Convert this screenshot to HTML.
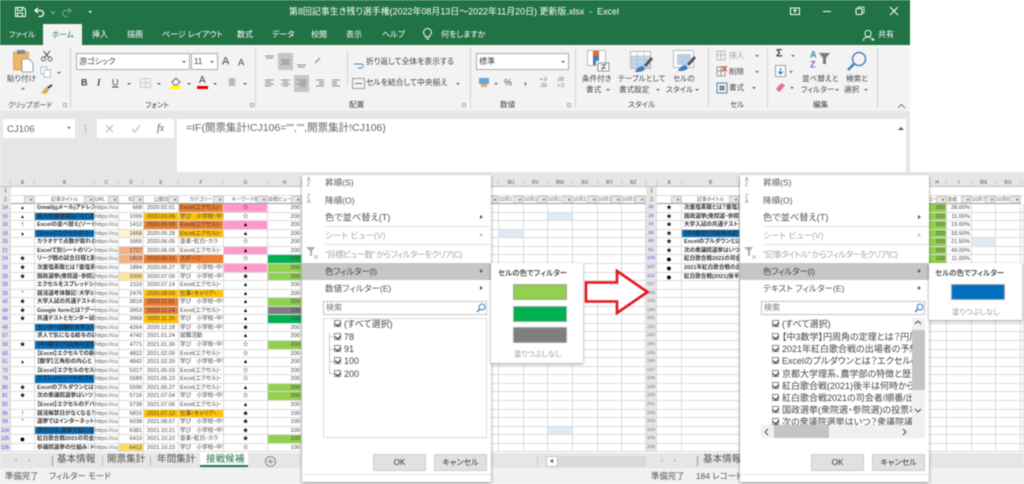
<!DOCTYPE html>
<html lang="ja"><head><meta charset="utf-8"><title>Excel</title>
<style>
*{box-sizing:border-box;margin:0;padding:0}
html,body{width:1024px;height:484px;overflow:hidden;background:#fff}
body{font-family:"Liberation Sans","Noto Sans CJK JP",sans-serif;font-feature-settings:"palt";color:#444}
#w{position:absolute;left:0;top:0;width:1024px;height:484px;overflow:hidden;filter:blur(.4px)}
.a{position:absolute}
.t{position:absolute;white-space:nowrap;line-height:1;transform:translateY(-50%)}
.w8{font-size:8px;color:#fff}
.r8{font-size:7.6px;color:#444}
.sp{position:absolute;width:1px;top:48px;height:60px;background:#d2d2d2}
.ar{position:absolute;width:0;height:0;border-left:2px solid transparent;border-right:2px solid transparent;border-top:2px solid #666}
.g{position:absolute;top:204px;font-size:5.6px;line-height:8.57px;color:#444}
.r{display:flex;height:8.57px}
.r>span{display:block;height:8.57px;overflow:hidden;white-space:nowrap;border-right:1px solid #dcdcdc;border-bottom:1px solid #dcdcdc;background-color:#fff}
.L .r>:nth-child(1){width:11px;background:#e6e6e6;color:#4a4ae8;text-align:center;font-size:5px}
.L .r>:nth-child(2){width:24px;text-align:center;color:#000}
.L .r>:nth-child(3){width:60px;font-weight:bold;color:#333;padding-left:2px}
.L .r>:nth-child(4){width:24px;color:#555}
.L .r>:nth-child(5){width:25px;text-align:right;padding-right:1px}
.L .r>:nth-child(6){width:35px;text-align:center}
.L .r>:nth-child(7){width:45px;padding-left:1px}
.L .r>:nth-child(8){width:44px;text-align:center;color:#000}
.L .r>:nth-child(9){width:34px;text-align:right;padding-right:1px}
.M .r>:nth-child(1){width:8px}
.M .r>:nth-child(2){width:25px}.M .r>:nth-child(3){width:24px}.M .r>:nth-child(4){width:25px}.M .r>:nth-child(5){width:25px}.M .r>:nth-child(6){width:24px}.M .r>:nth-child(7){width:24px}
.M .r>:nth-child(8),.R .r>:nth-child(1){width:11px;background:#e6e6e6;color:#4a4ae8;text-align:center;font-size:4.8px}
.R .r>:nth-child(2){width:25px;text-align:center;color:#000}
.R .r>:nth-child(3){width:58px;font-weight:bold;color:#333;padding-left:2px}
.R .r>:nth-child(4){width:188px}
.R .r>:nth-child(5){width:19px;text-align:right;padding-right:1px}
.R .r>:nth-child(6){width:25px;text-align:right;padding-right:1px}
.R .r>:nth-child(7){width:24px}.R .r>:nth-child(8){width:25px}.R .r>:nth-child(9){width:3px}
.n>span{color:#777!important}
.r>span.o{background:#ed7d31}.r>span.y{background:#ffc000}.r>span.p{background:#ff99cc}
.r>span.bl{background:#0070c0;color:#111}.r>span.gr{background:#92d050}.r>span.g2{background:#00b050}
.r>span.k{background:#7f7f7f}.r>span.ly{background:#fff2cc}.r>span.lo{background:#f4b183}
.r>span.l2{background:#ffe699}.r>span.l3{background:#ffd966}.r>span.lb{background:#ddebf7}
.s{color:#c4c4c4}
.h{position:absolute;top:180px;height:7px;background:#e6e6e6;border-right:1px solid #cfcfcf;border-bottom:1px solid #c0c0c0;font-size:5px;line-height:7px;text-align:center;color:#555}
.f{position:absolute;top:196px;height:8px;background:#fff;border-right:1px solid #dcdcdc;border-bottom:1px solid #9a9a9a;font-size:5px;line-height:8px;color:#555;white-space:nowrap;overflow:hidden;text-align:center}
.f::after{content:"";position:absolute;right:0;top:0;width:8px;height:7px;background:#e6e6e6;border:1px solid #c8c8c8}
.f::before{content:"";position:absolute;right:2.500px;top:3px;width:0;height:0;border-left:1.500px solid transparent;border-right:1.500px solid transparent;border-top:2px solid #333;z-index:2}
.menu{position:absolute;top:175px;width:189px;height:307px;background:#fff;box-shadow:0 1px 3px rgba(0,0,0,.45);font-size:8.6px;color:#555}
.menu .t{left:23px}
.dis{color:#aaa!important}
.tri{position:absolute;left:178px;width:0;height:0;border-top:2.500px solid transparent;border-bottom:2.500px solid transparent;border-left:3px solid #555}
.ln{position:absolute;left:23px;right:0;height:1px;background:#e2e2e2}
.box{position:absolute;border:1px solid #dadada;background:#fff}
.btn{position:absolute;top:279px;width:53px;height:17px;background:#e1e1e1;border:1px solid #cfcfcf;text-align:center;font-size:8px;line-height:15px;color:#333}
.cb{position:absolute;left:32px;width:7px;height:7px;border:1px solid #8a8a8a;background:#fff}
.cb::after{content:"";position:absolute;left:1px;top:0;width:3px;height:4px;border:solid #222;border-width:0 1px 1px 0;transform:rotate(40deg)}
.it{position:absolute;left:42px;white-space:nowrap;font-size:9px;line-height:12px;color:#444}
.st{position:absolute;left:27px;width:5px;height:1px;background:#c8c8c8}
.sub{position:absolute;top:263px;background:#fff;box-shadow:0 1px 3px rgba(0,0,0,.4);z-index:3}
.sw{position:absolute;left:22px;width:54px;height:16px;border:1px solid #a8a8a8}
</style></head><body><div id="w">

<div class="a" style="left:0;top:0;width:910px;height:45px;background:#217346"></div>
<div class="a" style="left:0;top:45px;width:910px;height:66px;background:#f3f3f3"></div>
<div class="a" style="left:0;top:111px;width:910px;height:67px;background:#e6e6e6"></div>
<div class="a" style="left:0;top:172px;width:1024px;height:8px;background:#e6e6e6"></div>

<svg class="a" style="left:14px;top:6px" width="100" height="12" viewBox="0 0 100 12" fill="none"><path d="M1.5 1.5h8l2 2v7h-10z M3.5 1.5v3h5v-3 M3.5 10.500v-3.500h5v3.500" stroke="#fff" stroke-width="1"/><path d="M24 2l-3 2.500 3 2.500M21.500 4.500h5a3 3 0 0 1 0 6h-2" stroke="#fff" stroke-width="1.300"/><path d="M37 5.500l2 2 2-2" stroke="#cfe3d8" stroke-width=".6"/><path d="M54 2l3 2.500-3 2.500M56.500 4.500h-5a3 3 0 0 0 0 6h2" stroke="#6aa386" stroke-width="1.200"/><path d="M78 5h-3.600l1.800 2.200z" fill="#fff"/></svg>
<div class="t w8" style="left:289px;top:12px;font-size:8.950px">第8回記事生き残り選手権(2022年08月13日～2022年11月20日) 更新版.xlsx&nbsp; -&nbsp; Excel</div>
<svg class="a" style="left:785px;top:5px" width="120" height="12" viewBox="0 0 120 12" fill="none" stroke="#fff"><rect x="5.500" y="3" width="9" height="6.500" stroke-width="1"/><path d="M10 8V4.500M8.500 6L10 4.500 11.500 6" stroke-width="1"/><path d="M38 6.500h8" stroke-width="1"/><rect x="71" y="3.500" width="6" height="6" rx="1" stroke-width="1"/><path d="M73 3.500v-1.500h6v6h-2" stroke-width=".8"/><path d="M105 2l8 8M113 2l-8 8" stroke-width="1"/></svg>

<div class="a" style="left:43px;top:24px;width:39px;height:21px;background:#f3f3f3"></div>
<div class="t w8" style="left:9px;top:34.500px;font-size:7.600px">ファイル</div>
<div class="t w8" style="left:52px;top:34.500px;color:#217346;font-size:7.600px">ホーム</div>
<div class="t w8" style="left:92px;top:34.500px">挿入</div>
<div class="t w8" style="left:127px;top:34.500px">描画</div>
<div class="t w8" style="left:162px;top:34.500px">ページ レイアウト</div>
<div class="t w8" style="left:237px;top:34.500px">数式</div>
<div class="t w8" style="left:272px;top:34.500px">データ</div>
<div class="t w8" style="left:311px;top:34.500px">校閲</div>
<div class="t w8" style="left:346px;top:34.500px">表示</div>
<div class="t w8" style="left:382px;top:34.500px">ヘルプ</div>
<svg class="a" style="left:422px;top:28px" width="11" height="13" viewBox="0 0 11 13" fill="none" stroke="#fff"><path d="M3.500 9V7.800C2.500 7 1.500 6 1.500 4.500a4 4 0 0 1 8 0C9.500 6 8.500 7 7.500 7.800V9zM4 11h3" stroke-width=".9"/></svg>
<div class="t w8" style="left:441px;top:34.500px">何をしますか</div>
<svg class="a" style="left:862px;top:29px" width="13" height="13" viewBox="0 0 13 13" fill="none" stroke="#fff"><circle cx="6" cy="4.500" r="3.200" stroke-width=".9"/><path d="M1 12c.5-3 2-4 5-4 1.500 0 2.500.5 3 1M9 10.500h3.500M10.800 9v3" stroke-width=".9"/></svg>
<div class="t w8" style="left:878px;top:34.500px">共有</div>

<!-- clipboard -->
<svg class="a" style="left:12px;top:49px" width="24" height="24" viewBox="0 0 24 24"><rect x="1.500" y="3" width="15" height="18" fill="#e8b96a" stroke="#c99a4a" stroke-width=".7"/><rect x="5" y="1" width="8" height="4" fill="#888"/><path d="M10 10h7l4 4v9H10z" fill="#fff" stroke="#8a8a8a" stroke-width=".8"/></svg>
<div class="t r8" style="left:7px;top:79px">貼り付け</div><div class="ar" style="left:21px;top:88px"></div>
<svg class="a" style="left:40px;top:50px" width="14" height="12" viewBox="0 0 14 12" fill="none" stroke="#4d6f95"><circle cx="3.500" cy="9" r="2" stroke-width="1"/><circle cx="10" cy="9" r="2" stroke-width="1"/><path d="M4.500 7.500L10 1M9 7.500L3.500 1" stroke="#555" stroke-width="1"/></svg>
<svg class="a" style="left:40px;top:66px" width="12" height="12" viewBox="0 0 12 12" fill="#fff" stroke="#9db3c9"><rect x="1" y="1" width="6" height="7" stroke-width=".8"/><rect x="4" y="4" width="6.500" height="7" stroke-width=".8"/></svg>
<div class="ar" style="left:57px;top:72px"></div>
<svg class="a" style="left:40px;top:83px" width="13" height="12" viewBox="0 0 13 12"><path d="M7 4L12 1l.5 1.500L8.500 6z" fill="#444"/><path d="M1 10l5-6 3 3-3 4z" fill="#e0ab55"/></svg>
<div class="t r8" style="left:8px;top:105px;font-size:7.200px">クリップボード</div>
<div class="sp" style="left:70px"></div>
<!-- font -->
<div class="box" style="left:76px;top:53px;width:114px;height:17px;border-color:#ababab;font-size:8px;line-height:15px;padding-left:2px;color:#444">游ゴシック</div>
<div class="ar" style="left:182px;top:61px"></div>
<div class="box" style="left:191px;top:53px;width:27px;height:17px;border-color:#ababab;font-size:8px;line-height:15px;padding-left:2px;color:#444">11</div>
<div class="ar" style="left:210px;top:61px"></div>
<div class="t" style="left:222px;top:62px;font-size:11px;color:#444">A</div>
<div class="t" style="left:238px;top:63px;font-size:9.500px;color:#444">A</div>
<div class="t" style="left:81px;top:83px;font-size:9px;font-weight:bold;color:#444">B</div>
<div class="t" style="left:97px;top:83px;font-size:9px;font-style:italic;font-family:'Liberation Serif',serif;font-weight:bold;color:#444">I</div>
<div class="t" style="left:112px;top:83px;font-size:9px;text-decoration:underline;color:#444">U</div>
<div class="ar" style="left:127px;top:83px"></div>
<svg class="a" style="left:140px;top:78px" width="12" height="11" viewBox="0 0 12 11" fill="none" stroke="#c4c4c4"><rect x=".5" y=".5" width="10" height="9" stroke-width=".8"/><path d="M5.500.5v9M.5 5h10" stroke-width=".8"/></svg>
<div class="ar" style="left:157px;top:83px"></div>
<svg class="a" style="left:170px;top:76px" width="12" height="13" viewBox="0 0 12 13" fill="none" stroke="#666"><path d="M2 6l4-4 4 4-3 3H4z" stroke-width=".9"/></svg>
<div class="a" style="left:170px;top:86px;width:11px;height:2.500px;background:#ffff00"></div>
<div class="ar" style="left:187px;top:83px"></div>
<div class="t" style="left:199px;top:81px;font-size:10px;color:#444">A</div>
<div class="a" style="left:197px;top:86px;width:11px;height:2.500px;background:#e00000"></div>
<div class="ar" style="left:213px;top:83px"></div>
<div class="t" style="left:228px;top:83px;font-size:8px;color:#777">亜</div>
<div class="ar" style="left:243px;top:83px"></div>
<div class="t r8" style="left:145px;top:105px;font-size:7.400px">フォント</div>
<div class="sp" style="left:255px"></div>
<!-- align -->
<div class="a" style="left:278px;top:53px;width:15px;height:17px;background:#c6c6c6"></div>
<div class="a" style="left:294px;top:75px;width:15px;height:17px;background:#c6c6c6"></div>
<svg class="a" style="left:262px;top:54px" width="80" height="36" viewBox="0 0 80 36" stroke="#8f8f8f" stroke-width="1"><path d="M3 2h9M4 4h7M19 6h9M20 8h7M19 10h9M35 11h9M36 13h7"/><path d="M3 26h9M3 28h6M3 30h9M3 32h6M19 26h9M21 28h5M19 30h9M21 32h5M35 26h9M38 28h6M35 30h9M38 32h6"/><path d="M54 26h8M57 28h5M57 30h5M54 32h8M70 26h8M70 28h5M70 30h5M70 32h8"/><path d="M58 4l-5 5" stroke="#777"/></svg>
<div class="sp" style="left:347px;height:36px;top:50px"></div>
<svg class="a" style="left:352px;top:55px" width="14" height="36" viewBox="0 0 14 36" fill="none" stroke="#4d82b8"><path d="M2 9h7a2 2 0 0 1 0 4H6" stroke-width=".9"/><rect x=".5" y="23.500" width="12" height="10" stroke="#888" stroke-width=".8"/><path d="M3 28.500h7" stroke-width="1"/></svg>
<div class="t r8" style="left:366px;top:62px;font-size:7.800px">折り返して全体を表示する</div>
<div class="t r8" style="left:366px;top:83px;font-size:7.800px">セルを結合して中央揃え</div>
<div class="ar" style="left:456px;top:83px"></div>
<div class="t r8" style="left:349px;top:105px">配置</div>
<div class="sp" style="left:470px"></div>
<!-- number -->
<div class="box" style="left:476px;top:53px;width:93px;height:17px;border-color:#ababab;font-size:8px;line-height:15px;padding-left:2px;color:#444">標準</div>
<div class="ar" style="left:561px;top:61px"></div>
<svg class="a" style="left:478px;top:77px" width="12" height="11" viewBox="0 0 12 11"><rect x="1" y="1" width="10" height="6" fill="#6fa3d6"/><rect x="3" y="7" width="6" height="3" fill="#e0ab55"/></svg>
<div class="ar" style="left:494px;top:83px"></div>
<div class="t" style="left:504px;top:83px;font-size:9px;color:#555">%</div>
<div class="t" style="left:524px;top:82px;font-size:10px;font-weight:bold;color:#444">,</div>
<div class="t" style="left:540px;top:83px;font-size:5px;line-height:6px;white-space:normal;width:12px;color:#4a6f96">+.0 .00</div>
<div class="t" style="left:557px;top:83px;font-size:5px;line-height:6px;white-space:normal;width:12px;color:#4a6f96">.00 +.0</div>
<div class="t r8" style="left:500px;top:105px">数値</div>
<div class="sp" style="left:575px"></div>
<!-- styles -->
<svg class="a" style="left:587px;top:50px" width="24" height="22" viewBox="0 0 24 22"><rect x=".5" y=".5" width="18" height="15" fill="#fff" stroke="#aaa" stroke-width=".8"/><rect x="6" y="1" width="6" height="5" fill="#e8662f"/><rect x="6" y="6" width="6" height="5" fill="#3f7fc1"/><rect x="6" y="11" width="3" height="4" fill="#3f7fc1"/><rect x="11" y="13" width="11" height="8" fill="#fff" stroke="#777" stroke-width=".8"/><path d="M14 15h5M14 18h5M18 14l-3 6" stroke="#444" stroke-width=".7"/></svg>
<svg class="a" style="left:630px;top:51px" width="24" height="22" viewBox="0 0 24 22"><rect x=".5" y=".5" width="20" height="17" fill="#fff" stroke="#aaa" stroke-width=".8"/><rect x="1" y="5" width="19" height="12" fill="#c5d6ea"/><path d="M7 1v16M14 1v16M1 5h19M1 9h19M1 13h19" stroke="#a0b3c7" stroke-width=".5"/><path d="M14 14L21 6l2 2-7 8z" fill="#555"/><path d="M5 21c1-3 4-6 8-6l2 3c-2 3-6 3-10 3z" fill="#3f7fc1"/></svg>
<svg class="a" style="left:673px;top:50px" width="24" height="23" viewBox="0 0 24 23"><rect x=".5" y=".5" width="20" height="17" fill="#fff" stroke="#aaa" stroke-width=".8"/><rect x="4" y="4" width="14" height="11" fill="#b9cde6"/><path d="M14 14L21 6l2 2-7 8z" fill="#555"/><path d="M5 21c1-3 4-6 8-6l2 3c-2 3-6 3-10 3z" fill="#3f7fc1"/></svg>
<div class="t r8" style="left:582px;top:79px">条件付き</div>
<div class="t r8" style="left:586px;top:90px">書式</div><div class="ar" style="left:606px;top:89px"></div>
<div class="t r8" style="left:618px;top:79px">テーブルとして</div>
<div class="t r8" style="left:619px;top:90px">書式設定</div><div class="ar" style="left:656px;top:89px"></div>
<div class="t r8" style="left:673px;top:79px">セルの</div>
<div class="t r8" style="left:666px;top:90px">スタイル</div><div class="ar" style="left:695px;top:89px"></div>
<div class="t r8" style="left:628px;top:105px">スタイル</div>
<div class="sp" style="left:708px"></div>
<!-- cells -->
<svg class="a" style="left:716px;top:50px" width="13" height="46" viewBox="0 0 13 46" fill="none" stroke="#b0b0b0" stroke-width=".8"><rect x="1" y="1" width="8" height="9"/><path d="M1 5h8M5 1v9"/><rect x="1" y="17" width="8" height="9" stroke="#888"/><path d="M5 17v9M1 21h8" stroke="#888"/><path d="M6 16l5 5M11 16l-5 5" stroke="#d9462a" stroke-width="1.200"/><rect x="1" y="33" width="10" height="10" stroke="#4a7fb5" stroke-width="1"/><rect x="3.500" y="35.500" width="5" height="5" fill="#888" stroke="none"/></svg>
<div class="t r8 dis" style="left:729px;top:56px">挿入</div><div class="ar" style="left:755px;top:55px"></div>
<div class="t r8" style="left:729px;top:72px">削除</div><div class="ar" style="left:755px;top:71px"></div>
<div class="t r8" style="left:729px;top:88px">書式</div><div class="ar" style="left:752px;top:87px"></div>
<div class="t r8" style="left:730px;top:105px">セル</div>
<div class="sp" style="left:767px"></div>
<!-- editing -->
<div class="t" style="left:776px;top:54px;font-size:11px;font-weight:bold;color:#444">Σ</div><div class="ar" style="left:791px;top:55px"></div>
<svg class="a" style="left:775px;top:65px" width="11" height="12" viewBox="0 0 11 12" fill="#fff" stroke="#888"><rect x=".5" y=".5" width="10" height="11" stroke-width=".8"/><path d="M5.500 3v6M3 6.500l2.500 2.500 2.500-2.500" fill="none" stroke="#2a6fb5" stroke-width="1.100"/></svg><div class="ar" style="left:789px;top:71px"></div>
<svg class="a" style="left:775px;top:82px" width="11" height="11" viewBox="0 0 11 11"><path d="M1 6.500L6.500 1 10 3.500 5 9.500H3z" fill="#e8728a"/></svg><div class="ar" style="left:790px;top:87px"></div>
<div class="t" style="left:810px;top:55px;font-size:9px;font-weight:bold;color:#4d82b8">A</div>
<div class="t" style="left:810px;top:65px;font-size:9px;font-weight:bold;color:#9a5bc0">Z</div>
<svg class="a" style="left:819px;top:53px" width="11" height="11" viewBox="0 0 11 11"><path d="M0 0h11L7 5v6H4V5z" fill="#7a7a7a"/></svg>
<div class="t r8" style="left:802px;top:79px">並べ替えと</div>
<div class="t r8" style="left:801px;top:90px">フィルター</div><div class="ar" style="left:835px;top:89px"></div>
<svg class="a" style="left:846px;top:50px" width="22" height="22" viewBox="0 0 22 22" fill="none"><circle cx="13" cy="9" r="6.500" stroke="#4d82b8" stroke-width="1.500"/><path d="M8 14l-6 6" stroke="#3f7fc1" stroke-width="2.500"/></svg>
<div class="t r8" style="left:846px;top:79px">検索と</div>
<div class="t r8" style="left:844px;top:90px">選択</div><div class="ar" style="left:864px;top:89px"></div>
<div class="t r8" style="left:813px;top:105px">編集</div>
<div class="sp" style="left:877px"></div>
<svg class="a" style="left:897px;top:103px" width="9" height="6" viewBox="0 0 9 6" fill="none" stroke="#555"><path d="M1 5l3.500-3.500L8 5" stroke-width=".8"/></svg>
<div class="a" style="left:250px;top:103px;width:4px;height:4px;border:1px solid #aaa"></div>
<div class="a" style="left:63px;top:103px;width:4px;height:4px;border:1px solid #aaa"></div>
<div class="a" style="left:462px;top:103px;width:4px;height:4px;border:1px solid #aaa"></div>
<div class="a" style="left:567px;top:103px;width:4px;height:4px;border:1px solid #aaa"></div>

<!-- formula bar -->
<div class="a" style="left:3px;top:119px;width:72px;height:19px;background:#fff"></div>
<div class="t" style="left:7px;top:130px;font-size:9.600px;color:#666">CJ106</div><div class="ar" style="left:67px;top:127px"></div>
<div class="a" style="left:85px;top:125px;width:1px;height:8px;border-left:1px dotted #999"></div>
<div class="a" style="left:97px;top:119px;width:77px;height:19px;background:#fff"></div>
<svg class="a" style="left:104px;top:124px" width="40" height="9" viewBox="0 0 40 9" fill="none" stroke="#b4b4b4"><path d="M2 1l7 7M9 1l-7 7M28 5l3 3 5-7" stroke-width="1"/></svg>
<div class="t" style="left:157px;top:129px;font-size:10px;font-style:italic;font-family:'Liberation Serif',serif;color:#555">fx</div>
<div class="a" style="left:177px;top:119px;width:729px;height:53px;background:#fff"></div>
<div class="t" style="left:186px;top:128px;font-size:10.500px;color:#666">=IF(開票集計!CJ106="","",開票集計!CJ106)</div>
<div class="ar" style="left:898px;top:127px;border-top:0;border-bottom:3px solid #555;border-left-width:3px;border-right-width:3px"></div>

<!-- LEFT sheet headers -->
<div class="a" style="left:0;top:180px;width:652px;height:24px;background:#fff"></div>
<div class="h" style="left:0;width:11px"></div><div class="h" style="left:11px;width:24px">A</div><div class="h" style="left:35px;width:60px">B</div><div class="h" style="left:95px;width:24px">C</div><div class="h" style="left:119px;width:25px">D</div><div class="h" style="left:144px;width:35px">E</div><div class="h" style="left:179px;width:45px">F</div><div class="h" style="left:224px;width:44px">G</div><div class="h" style="left:268px;width:34px">H</div>
<div class="h" style="left:491px;width:8px"></div><div class="h" style="left:499px;width:25px">BU</div><div class="h" style="left:524px;width:24px">BV</div><div class="h" style="left:548px;width:25px">BW</div><div class="h" style="left:573px;width:25px">BX</div><div class="h" style="left:598px;width:24px">BY</div><div class="h" style="left:622px;width:24px">BZ</div>
<div class="a" style="left:0;top:187px;width:11px;height:17px;background:#e6e6e6;font-size:5px;line-height:9px;text-align:center;color:#555">1<br>2</div>
<div class="a" style="left:646px;top:187px;width:11px;height:17px;background:#e6e6e6;font-size:5px;line-height:9px;text-align:center;color:#555">1<br>2</div>
<div class="a" style="left:11px;top:195px;width:291px;height:1px;background:#dcdcdc"></div>
<div class="a" style="left:491px;top:195px;width:155px;height:1px;background:#dcdcdc"></div>
<div class="f" style="left:11px;width:24px"></div><div class="f" style="left:35px;width:60px">記事タイトル</div><div class="f" style="left:95px;width:24px;text-align:left">URL</div><div class="f" style="left:119px;width:25px">ID</div><div class="f" style="left:144px;width:35px">公開日</div><div class="f" style="left:179px;width:45px">カテゴリー</div><div class="f" style="left:224px;width:44px">キーワード順</div><div class="f" style="left:268px;width:34px;text-align:left">目標ビュー</div>
<div class="f" style="left:491px;width:8px"></div><div class="f" style="left:499px;width:25px;text-align:left">10月1</div><div class="f" style="left:524px;width:24px;text-align:left">10月1</div><div class="f" style="left:548px;width:25px;text-align:left">10月1</div><div class="f" style="left:573px;width:25px;text-align:left">10月1</div><div class="f" style="left:598px;width:24px;text-align:left">10月1</div><div class="f" style="left:622px;width:24px;text-align:left">10月1</div>

<div class="g L" style="left:0;width:302px">
<div class="r"><span>14</span><span>▴</span><span>Gmail(gメール)アドレス</span><span>https://cu</span><span>668</span><span>2020.02.01</span><span class="o">Excel(エクセル)・</span><span class="p s">☆</span><span>200</span></div>
<div class="r"><span>15</span><span>▴</span><span class="bl">英大合格体験記「はじま</span><span>https://cu</span><span>1099</span><span class="y">2020.03.09</span><span class="y">学び　小学校・中学</span><span class="s">☆</span><span>200</span></div>
<div class="r"><span>16</span><span>!</span><span>Excelの並べ替え(ソート</span><span>https://cu</span><span>1412</span><span class="o">2020.05.08</span><span class="o">Excel(エクセル)・</span><span class="p">▲</span><span>200</span></div>
<div class="r"><span>18</span><span>▴</span><span class="bl">【Excel】エクセルのキー</span><span>https://cu</span><span class="ly">1668</span><span>2020.05.28</span><span class="y">Excel(エクセル)・</span><span>▲</span><span>200</span></div>
<div class="r"><span>20</span><span></span><span>カラオケで点数が取れる</span><span>https://cu</span><span>1665</span><span>2020.06.05</span><span>音楽・紅白・カラ</span><span class="s">☆</span><span>200</span></div>
<div class="r"><span>21</span><span></span><span>Excelで別シートのリンク</span><span>https://cu</span><span class="lo">1727</span><span>2020.06.09</span><span>Excel(エクセル)・</span><span class="p">▲</span><span>200</span></div>
<div class="r"><span>24</span><span>★</span><span>リーグ戦の試合日程と勝</span><span>https://cu</span><span class="lo">1819</span><span class="o">2020.06.19</span><span class="o">スポーツ</span><span class="s">☆</span><span class="g2">200</span></div>
<div class="r"><span>26</span><span>★</span><span>次亜塩素酸とは？亜塩素</span><span>https://cu</span><span>1884</span><span>2020.06.27</span><span>学び　小学校・中学</span><span class="p">▲</span><span class="gr">200</span></div>
<div class="r"><span>28</span><span>★</span><span>国政選挙(衆院選・参院選</span><span>https://cu</span><span class="l2">2006</span><span>2020.07.09</span><span>学び　小学校・中学</span><span>★</span><span class="gr">200</span></div>
<div class="r"><span>29</span><span></span><span>エクセルをスプレッドシ</span><span>https://cu</span><span>2110</span><span>2020.07.14</span><span>Excel(エクセル)・</span><span>▲</span><span>200</span></div>
<div class="r"><span>30</span><span>"</span><span>就活選考体験記：大学3年</span><span>https://cu</span><span>2476</span><span class="y">2020.08.03</span><span class="y">仕事・キャリア・</span><span>▲</span><span>200</span></div>
<div class="r"><span>42</span><span>★</span><span>大学入試の共通テストの</span><span>https://cu</span><span>3818</span><span class="o">2020.11.01</span><span>学び　小学校・中学</span><span>▲</span><span class="gr">200</span></div>
<div class="r"><span>44</span><span>★</span><span>Google formとは？グー</span><span>https://cu</span><span>3953</span><span class="o">2020.11.24</span><span>Excel(エクセル)・</span><span>▲</span><span class="k">200</span></div>
<div class="r"><span>45</span><span>★</span><span>共通テストとセンター試</span><span>https://cu</span><span>3968</span><span class="y">2020.11.26</span><span>学び　小学校・中学</span><span>▲</span><span class="g2">200</span></div>
<div class="r"><span>49</span><span></span><span class="bl">センター試験や大学入学</span><span>https://cu</span><span>4264</span><span>2020.12.18</span><span>学び　小学校・中学</span><span>★</span><span>200</span></div>
<div class="r"><span>57</span><span></span><span>求人で気になる給与の話</span><span>https://cu</span><span>4742</span><span>2021.01.24</span><span>就職活動</span><span>▲</span><span>200</span></div>
<div class="r"><span>59</span><span>★</span><span class="bl">【中3数学】円周角の定理</span><span>https://cu</span><span>4771</span><span>2021.01.30</span><span>学び　小学校・中学</span><span class="s">☆</span><span class="gr">200</span></div>
<div class="r"><span>60</span><span></span><span>【Excel】エクセルでの新</span><span>https://cu</span><span>4822</span><span>2021.02.09</span><span>Excel(エクセル)・</span><span class="s">☆</span><span>200</span></div>
<div class="r"><span>61</span><span>▴</span><span>【数学】三角形の内心と</span><span>https://cu</span><span>4842</span><span>2021.02.20</span><span>学び　小学校・中学</span><span>▲</span><span>200</span></div>
<div class="r"><span>72</span><span></span><span>【Excel】エクセルのセル</span><span>https://cu</span><span>5317</span><span>2021.05.03</span><span>Excel(エクセル)・</span><span class="s">☆</span><span>200</span></div>
<div class="r"><span>79</span><span></span><span class="bl">スプレッドシートのプル</span><span>https://cu</span><span>5589</span><span>2021.06.23</span><span>Excel(エクセル)・</span><span class="s">☆</span><span>200</span></div>
<div class="r"><span>80</span><span>★</span><span>Excelのプルダウンとは？</span><span>https://cu</span><span>5596</span><span>2021.06.27</span><span>Excel(エクセル)・</span><span>▲</span><span class="gr">200</span></div>
<div class="r"><span>81</span><span>★</span><span>次の衆議院選挙はいつ？</span><span>https://cu</span><span>5716</span><span>2021.07.04</span><span>学び　小学校・中学</span><span class="s">☆</span><span class="gr">200</span></div>
<div class="r"><span>82</span><span></span><span>【Excel】エクセルのデバ</span><span>https://cu</span><span>5738</span><span>2021.07.06</span><span>Excel(エクセル)・</span><span>▲</span><span>200</span></div>
<div class="r"><span>85</span><span>!</span><span>就活解禁日がなくなる？</span><span>https://cu</span><span>5815</span><span class="y">2021.07.12</span><span class="y">仕事・キャリア・</span><span>★</span><span>100</span></div>
<div class="r"><span>93</span><span>"</span><span>選挙ではインターネット</span><span>https://cu</span><span>6038</span><span>2021.08.07</span><span>学び　小学校・中学</span><span>★</span><span>100</span></div>
<div class="r"><span>104</span><span></span><span class="bl">票分とは、選挙で気にな</span><span>https://cu</span><span>6381</span><span>2021.10.21</span><span>学び　小学校・中学</span><span>★</span><span>100</span></div>
<div class="r"><span>105</span><span style="font-size:9px">●</span><span>紅白歌合戦2021の司会者</span><span>https://cu</span><span>6410</span><span>2021.10.22</span><span>音楽・紅白・カラ</span><span>★</span><span class="gr">100</span></div>
<div class="r"><span>106</span><span></span><span>参議院選挙の仕組み：ド</span><span>https://cu</span><span class="l3">6412</span><span>2021.10.23</span><span>学び　小学校・中学</span><span class="s">☆</span><span>100</span></div>
</div>

<div class="g M" style="left:491px;width:166px">
<div class="r"><span></span><span></span><span></span><span></span><span></span><span></span><span></span><span>26</span></div>
<div class="r"><span></span><span></span><span></span><span class="lb"></span><span></span><span></span><span></span><span>28</span></div>
<div class="r"><span></span><span></span><span></span><span></span><span></span><span></span><span></span><span>42</span></div>
<div class="r"><span></span><span class="lb"></span><span></span><span></span><span></span><span></span><span></span><span>59</span></div>
<div class="r"><span></span><span></span><span></span><span></span><span></span><span></span><span></span><span>80</span></div>
<div class="r"><span></span><span></span><span></span><span></span><span></span><span></span><span></span><span>81</span></div>
<div class="r"><span></span><span></span><span></span><span></span><span></span><span></span><span></span><span>105</span></div>
<div class="r"><span></span><span></span><span></span><span></span><span></span><span></span><span></span><span>107</span></div>
<div class="r"><span></span><span></span><span></span><span></span><span></span><span></span><span></span><span>112</span></div>
<div class="r n"><span></span><span></span><span></span><span></span><span></span><span></span><span></span><span>187</span></div>
<div class="r n"><span></span><span></span><span></span><span></span><span></span><span></span><span></span><span>188</span></div>
<div class="r n"><span></span><span></span><span></span><span></span><span></span><span></span><span></span><span>189</span></div>
<div class="r n"><span></span><span></span><span></span><span></span><span></span><span></span><span></span><span>190</span></div>
<div class="r n"><span></span><span></span><span></span><span></span><span></span><span></span><span></span><span>191</span></div>
<div class="r n"><span></span><span></span><span></span><span></span><span></span><span></span><span></span><span>192</span></div>
<div class="r n"><span></span><span></span><span></span><span></span><span></span><span></span><span></span><span>193</span></div>
<div class="r n"><span></span><span></span><span></span><span></span><span></span><span></span><span></span><span>194</span></div>
<div class="r n"><span></span><span></span><span></span><span></span><span></span><span></span><span></span><span>195</span></div>
<div class="r n"><span></span><span></span><span></span><span></span><span></span><span></span><span></span><span>196</span></div>
<div class="r n"><span></span><span></span><span></span><span></span><span></span><span></span><span></span><span>197</span></div>
<div class="r n"><span></span><span></span><span></span><span></span><span></span><span></span><span></span><span>198</span></div>
<div class="r n"><span></span><span></span><span></span><span></span><span></span><span></span><span></span><span>199</span></div>
<div class="r n"><span></span><span></span><span></span><span></span><span></span><span></span><span></span><span>200</span></div>
<div class="r n"><span></span><span></span><span></span><span></span><span></span><span></span><span></span><span>201</span></div>
<div class="r n"><span></span><span></span><span></span><span></span><span></span><span></span><span></span><span>202</span></div>
<div class="r n"><span></span><span></span><span></span><span></span><span></span><span></span><span></span><span>203</span></div>
<div class="r n"><span></span><span></span><span></span><span class="lb"></span><span></span><span></span><span></span><span>204</span></div>
<div class="r n"><span></span><span></span><span></span><span></span><span></span><span></span><span></span><span>205</span></div>
<div class="r n"><span></span><span></span><span></span><span></span><span></span><span></span><span></span><span>206</span></div>
</div>

<!-- RIGHT sheet -->
<div class="a" style="left:657px;top:180px;width:367px;height:24px;background:#fff"></div>
<div class="h" style="left:646px;width:11px"></div><div class="h" style="left:657px;width:25px">A</div><div class="h" style="left:682px;width:58px">B</div><div class="h" style="left:928px;width:19px">H</div><div class="h" style="left:947px;width:25px">I</div><div class="h" style="left:972px;width:24px">BN</div><div class="h" style="left:996px;width:25px">BO</div><div class="h" style="left:1021px;width:3px"></div>
<div class="a" style="left:657px;top:195px;width:367px;height:1px;background:#dcdcdc"></div>
<div class="f" style="left:657px;width:25px"></div><div class="f" style="left:682px;width:58px">記事タイトル</div><div class="f" style="left:928px;width:19px;text-align:left">ユー</div><div class="f" style="left:947px;width:25px;text-align:left">達成</div><div class="f" style="left:972px;width:24px;text-align:left">10月7</div><div class="f" style="left:996px;width:25px;text-align:left">10月8</div>

<div class="g R" style="left:646px;width:378px">
<div class="r"><span>26</span><span>★</span><span>次亜塩素酸とは？亜塩素</span><span></span><span class="gr">200</span><span>28.00%</span><span></span><span></span><span></span></div>
<div class="r"><span>28</span><span>★</span><span>国政選挙(衆院選・参院選</span><span></span><span class="gr">200</span><span>11.00%</span><span></span><span></span><span></span></div>
<div class="r"><span>42</span><span>★</span><span>大学入試の共通テストの</span><span></span><span class="gr">200</span><span>19.00%</span><span></span><span></span><span></span></div>
<div class="r"><span>59</span><span>★</span><span class="bl">【中3数学】円周角の定理</span><span></span><span class="gr">200</span><span>33.50%</span><span></span><span></span><span></span></div>
<div class="r"><span>80</span><span>★</span><span>Excelのプルダウンとは？</span><span></span><span class="gr">200</span><span>21.50%</span><span class="lb"></span><span></span><span></span></div>
<div class="r"><span>81</span><span>★</span><span>次の衆議院選挙はいつ？</span><span></span><span class="gr">200</span><span>49.00%</span><span></span><span></span><span></span></div>
<div class="r"><span>105</span><span style="font-size:9px">●</span><span>紅白歌合戦2021の司会者</span><span></span><span class="gr">100</span><span>11.00%</span><span></span><span></span><span></span></div>
<div class="r"><span>107</span><span style="font-size:9px">●</span><span>2021年紅白歌合戦の出場</span><span></span><span class="gr">100</span><span></span><span></span><span></span><span></span></div>
<div class="r"><span>112</span><span style="font-size:9px">●</span><span>紅白歌合戦(2021)後半は</span><span></span><span class="gr">100</span><span></span><span></span><span></span><span></span></div>
<div class="r n"><span>187</span><span></span><span></span><span></span><span></span><span></span><span></span><span></span><span></span></div>
<div class="r n"><span>188</span><span></span><span></span><span></span><span></span><span></span><span></span><span></span><span></span></div>
<div class="r n"><span>189</span><span></span><span></span><span></span><span></span><span></span><span></span><span></span><span></span></div>
<div class="r n"><span>190</span><span></span><span></span><span></span><span></span><span></span><span></span><span></span><span></span></div>
<div class="r n"><span>191</span><span></span><span></span><span></span><span></span><span></span><span></span><span></span><span></span></div>
<div class="r n"><span>192</span><span></span><span></span><span></span><span></span><span></span><span></span><span></span><span></span></div>
<div class="r n"><span>193</span><span></span><span></span><span></span><span></span><span></span><span></span><span></span><span></span></div>
<div class="r n"><span>194</span><span></span><span></span><span></span><span></span><span></span><span></span><span></span><span></span></div>
<div class="r n"><span>195</span><span></span><span></span><span></span><span></span><span></span><span></span><span></span><span></span></div>
<div class="r n"><span>196</span><span></span><span></span><span></span><span></span><span></span><span></span><span></span><span></span></div>
<div class="r n"><span>197</span><span></span><span></span><span></span><span></span><span></span><span></span><span></span><span></span></div>
<div class="r n"><span>198</span><span></span><span></span><span></span><span></span><span></span><span></span><span></span><span></span></div>
<div class="r n"><span>199</span><span></span><span></span><span></span><span></span><span></span><span></span><span></span><span></span></div>
<div class="r n"><span>200</span><span></span><span></span><span></span><span></span><span></span><span></span><span></span><span></span></div>
<div class="r n"><span>201</span><span></span><span></span><span></span><span></span><span></span><span></span><span></span><span></span></div>
<div class="r n"><span>202</span><span></span><span></span><span></span><span></span><span></span><span></span><span></span><span></span></div>
<div class="r n"><span>203</span><span></span><span></span><span></span><span></span><span></span><span></span><span></span><span></span></div>
<div class="r n"><span>204</span><span></span><span></span><span></span><span></span><span></span><span></span><span></span><span></span></div>
<div class="r n"><span>205</span><span></span><span></span><span></span><span></span><span></span><span></span><span></span><span></span></div>
<div class="r n"><span>206</span><span></span><span></span><span></span><span></span><span></span><span></span><span></span><span></span></div>
</div>

<!-- bottom bars -->
<div class="a" style="left:0;top:453px;width:1024px;height:15px;background:#e6e6e6"></div>
<div class="a" style="left:0;top:468px;width:1024px;height:16px;background:#f1f1f1"></div>
<div class="a" style="left:200px;top:453px;width:48px;height:14px;background:#fff;border-bottom:2px solid #217346"></div>
<div class="t" style="left:14px;top:461px;font-size:6px;color:#bbb">◂</div><div class="t" style="left:28px;top:461px;font-size:6px;color:#bbb">▸</div>
<div class="a" style="left:52px;top:456px;width:1px;height:10px;background:#999"></div>
<div class="t" style="left:57px;top:460px;font-size:9.600px;color:#555">基本情報</div>
<div class="a" style="left:102px;top:456px;width:1px;height:10px;background:#bbb"></div>
<div class="t" style="left:107px;top:460px;font-size:9.600px;color:#555">開票集計</div>
<div class="a" style="left:150px;top:456px;width:1px;height:10px;background:#bbb"></div>
<div class="t" style="left:157px;top:460px;font-size:9.600px;color:#555">年間集計</div>
<div class="t" style="left:206px;top:460px;font-size:9.600px;color:#217346">接戦候補</div>
<svg class="a" style="left:265px;top:456px" width="11" height="11" viewBox="0 0 11 11" fill="none" stroke="#777"><circle cx="5.500" cy="5.500" r="5" stroke-width=".8"/><path d="M5.500 2.500v6M2.500 5.500h6" stroke-width=".8"/></svg>
<div class="t" style="left:5px;top:476px;font-size:8.400px;color:#555">準備完了</div>
<div class="t" style="left:49px;top:476px;font-size:8.400px;color:#555">フィルター モード</div>
<div class="a" style="left:537px;top:457px;width:1px;height:9px;border-left:1px dotted #aaa"></div>
<div class="a" style="left:546px;top:456px;width:12px;height:11px;background:#fff;border:1px solid #c4c4c4"></div>
<div class="a" style="left:550px;top:459px;width:0;height:0;border-top:2.500px solid transparent;border-bottom:2.500px solid transparent;border-right:3px solid #444"></div>
<div class="a" style="left:558px;top:456px;width:88px;height:11px;background:#dadada"></div>
<div class="t" style="left:660px;top:461px;font-size:6px;color:#bbb">◂</div><div class="t" style="left:674px;top:461px;font-size:6px;color:#bbb">▸</div>
<div class="a" style="left:697px;top:456px;width:1px;height:10px;background:#999"></div>
<div class="t" style="left:703px;top:460px;font-size:9.600px;color:#555">基本情報</div>
<div class="t" style="left:651px;top:476px;font-size:8.400px;color:#555">準備完了</div>
<div class="t" style="left:696px;top:476px;font-size:8.400px;color:#555">184 レコード</div>

<!-- red arrow -->
<svg class="a" style="left:580px;top:265px;z-index:2" width="74" height="54" viewBox="0 0 74 54"><path d="M6 17.500h31V6l30.500 21L37 48V36.500H6z" fill="#fff" stroke="#e8161c" stroke-width="2.600"/></svg>

<!-- LEFT MENU -->
<div class="menu" style="left:302px">
<div class="t" style="top:8px;left:5px;font-size:5px;color:#4d82b8;width:8px;line-height:5px;white-space:normal">A<br>Z</div>
<div class="t" style="top:25px;left:5px;font-size:5px;color:#9a5bc0;width:8px;line-height:5px;white-space:normal">Z<br>A</div>
<div class="t" style="top:8px">昇順(S)</div>
<div class="t" style="top:25.500px">降順(O)</div>
<div class="t" style="top:43px;font-size:9.200px">色で並べ替え(T)</div><div class="tri" style="top:40px"></div>
<div class="ln" style="top:51px"></div>
<div class="t dis" style="top:61px">シート ビュー(V)</div><div class="tri" style="top:58px;border-left-color:#bbb"></div>
<div class="ln" style="top:69px"></div>
<svg class="a" style="left:4px;top:72px" width="14" height="13" viewBox="0 0 14 13"><path d="M0 0h9L6 4v5H4V4z" fill="#b0b0b0"/><path d="M8 8l4 4M12 8l-4 4" stroke="#b0b0b0" stroke-width=".8"/></svg>
<div class="t dis" style="top:79.500px;letter-spacing:-.75px">"目標ビュー数" からフィルターをクリア(C)</div>
<div class="a" style="left:0;top:88px;width:189px;height:17px;background:#c6c6c6"></div>
<div class="t" style="top:96.500px;color:#444;letter-spacing:-.3px">色フィルター(I)</div><div class="tri" style="top:94px"></div>
<div class="t" style="top:114px">数値フィルター(E)</div><div class="tri" style="top:111px"></div>
<div class="box" style="left:21px;top:126px;width:164px;height:14px;border-color:#c4c4c4;font-size:8px;line-height:12px;padding-left:2px;color:#777">検索</div>
<svg class="a" style="left:174px;top:128px" width="10" height="10" viewBox="0 0 10 10" fill="none" stroke="#3f7fc1"><circle cx="6" cy="4" r="3" stroke-width="1"/><path d="M3.500 6.500L1 9" stroke-width="1.400"/></svg>
<div class="box" style="left:21px;top:143px;width:164px;height:120px"></div>
<div class="a" style="left:27px;top:158px;width:1px;height:40px;background:#c8c8c8"></div>
<div class="st" style="top:161px"></div><div class="st" style="top:174px"></div><div class="st" style="top:186px"></div><div class="st" style="top:198px"></div>
<div class="cb" style="top:145px"></div><div class="it" style="top:143px">(すべて選択)</div>
<div class="cb" style="top:158px"></div><div class="it" style="top:155.500px">78</div>
<div class="cb" style="top:170px"></div><div class="it" style="top:168px">91</div>
<div class="cb" style="top:182px"></div><div class="it" style="top:180px">100</div>
<div class="cb" style="top:195px"></div><div class="it" style="top:192.500px">200</div>
<div class="btn" style="left:71px">OK</div><div class="btn" style="left:132px">キャンセル</div>
<div class="a" style="left:0;top:299px;width:189px;height:1px;background:#e4e4e4"></div>
</div>
<div class="sub" style="left:491px;width:92px;height:100px">
<div class="t" style="left:7px;top:10px;font-size:7.400px;font-weight:bold;color:#555">セルの色でフィルター</div>
<div class="sw" style="top:21px;background:#92d050"></div>
<div class="sw" style="top:43px;background:#00b050"></div>
<div class="sw" style="top:64px;background:#7f7f7f"></div>
<div class="t" style="left:23px;top:91px;font-size:7.400px;color:#999">塗りつぶしなし</div>
</div>

<!-- RIGHT MENU -->
<div class="menu" style="left:740px">
<div class="t" style="top:8px;left:5px;font-size:5px;color:#4d82b8;width:8px;line-height:5px;white-space:normal">A<br>Z</div>
<div class="t" style="top:25px;left:5px;font-size:5px;color:#9a5bc0;width:8px;line-height:5px;white-space:normal">Z<br>A</div>
<div class="t" style="top:8px">昇順(S)</div>
<div class="t" style="top:25.500px">降順(O)</div>
<div class="t" style="top:43px;font-size:9.200px">色で並べ替え(T)</div><div class="tri" style="top:40px"></div>
<div class="ln" style="top:51px"></div>
<div class="t dis" style="top:61px">シート ビュー(V)</div><div class="tri" style="top:58px;border-left-color:#bbb"></div>
<div class="ln" style="top:69px"></div>
<svg class="a" style="left:4px;top:72px" width="14" height="13" viewBox="0 0 14 13"><path d="M0 0h9L6 4v5H4V4z" fill="#b0b0b0"/><path d="M8 8l4 4M12 8l-4 4" stroke="#b0b0b0" stroke-width=".8"/></svg>
<div class="t dis" style="top:79.500px;letter-spacing:-.75px">"記事タイトル" からフィルターをクリア(C)</div>
<div class="a" style="left:0;top:88px;width:189px;height:17px;background:#c6c6c6"></div>
<div class="t" style="top:96.500px;color:#444;letter-spacing:-.3px">色フィルター(I)</div><div class="tri" style="top:94px"></div>
<div class="t" style="top:114px">テキスト フィルター(E)</div><div class="tri" style="top:111px"></div>
<div class="box" style="left:21px;top:126px;width:164px;height:14px;border-color:#c4c4c4;font-size:8px;line-height:12px;padding-left:2px;color:#777">検索</div>
<svg class="a" style="left:174px;top:128px" width="10" height="10" viewBox="0 0 10 10" fill="none" stroke="#3f7fc1"><circle cx="6" cy="4" r="3" stroke-width="1"/><path d="M3.500 6.500L1 9" stroke-width="1.400"/></svg>
<div class="box" style="left:21px;top:143px;width:164px;height:120px;overflow:hidden;border:0">
<div class="cb" style="left:11px;top:2px"></div><div class="it" style="left:21px;top:0">(すべて選択)</div>
<div class="cb" style="left:11px;top:14.500px"></div><div class="it" style="left:21px;top:12.500px">【中3数学】円周角の定理とは？円周角</div>
<div class="cb" style="left:11px;top:26.500px"></div><div class="it" style="left:21px;top:24.500px">2021年紅白歌合戦の出場者の予想</div>
<div class="cb" style="left:11px;top:39px"></div><div class="it" style="left:21px;top:37px">Excelのプルダウンとは？エクセルのドロッ</div>
<div class="cb" style="left:11px;top:51.500px"></div><div class="it" style="left:21px;top:49.500px">京都大学理系、農学部の特徴と歴史</div>
<div class="cb" style="left:11px;top:63.500px"></div><div class="it" style="left:21px;top:61.500px">紅白歌合戦(2021)後半は何時から？</div>
<div class="cb" style="left:11px;top:75.500px"></div><div class="it" style="left:21px;top:73.500px">紅白歌合戦2021の司会者/順番/出</div>
<div class="cb" style="left:11px;top:88px"></div><div class="it" style="left:21px;top:86px">国政選挙(衆院選・参院選)の投票率</div>
<div class="cb" style="left:11px;top:100px"></div><div class="it" style="left:21px;top:98px">次の衆議院選挙はいつ？衆議院議員</div>
<div class="a" style="left:151px;top:0;width:13px;height:107px;background:#f0f0f0"></div>
<div class="a" style="left:151px;top:12px;width:13px;height:60px;background:#c4c4c4"></div>
<div class="a" style="left:0;top:107px;width:164px;height:13px;background:#f0f0f0"></div>
<div class="a" style="left:13px;top:107px;width:55px;height:13px;background:#c4c4c4"></div>
<svg class="a" style="left:0;top:0" width="164" height="120" fill="none" stroke="#444"><path d="M154 6l3-3 3 3M154 91l3 3 3-3M7 111l-3 3 3 3M142 111l3 3-3 3" stroke-width=".9"/></svg>
</div>
<div class="btn" style="left:71px">OK</div><div class="btn" style="left:132px">キャンセル</div>
<div class="a" style="left:0;top:299px;width:189px;height:1px;background:#e4e4e4"></div>
</div>
<div class="sub" style="left:929px;width:93px;height:57px">
<div class="t" style="left:6px;top:10px;font-size:7.400px;font-weight:bold;color:#555">セルの色でフィルター</div>
<div class="sw" style="top:21px;background:#0070c0"></div>
<div class="t" style="left:23px;top:49px;font-size:7.400px;color:#999">塗りつぶしなし</div>
</div>

</div></body></html>
